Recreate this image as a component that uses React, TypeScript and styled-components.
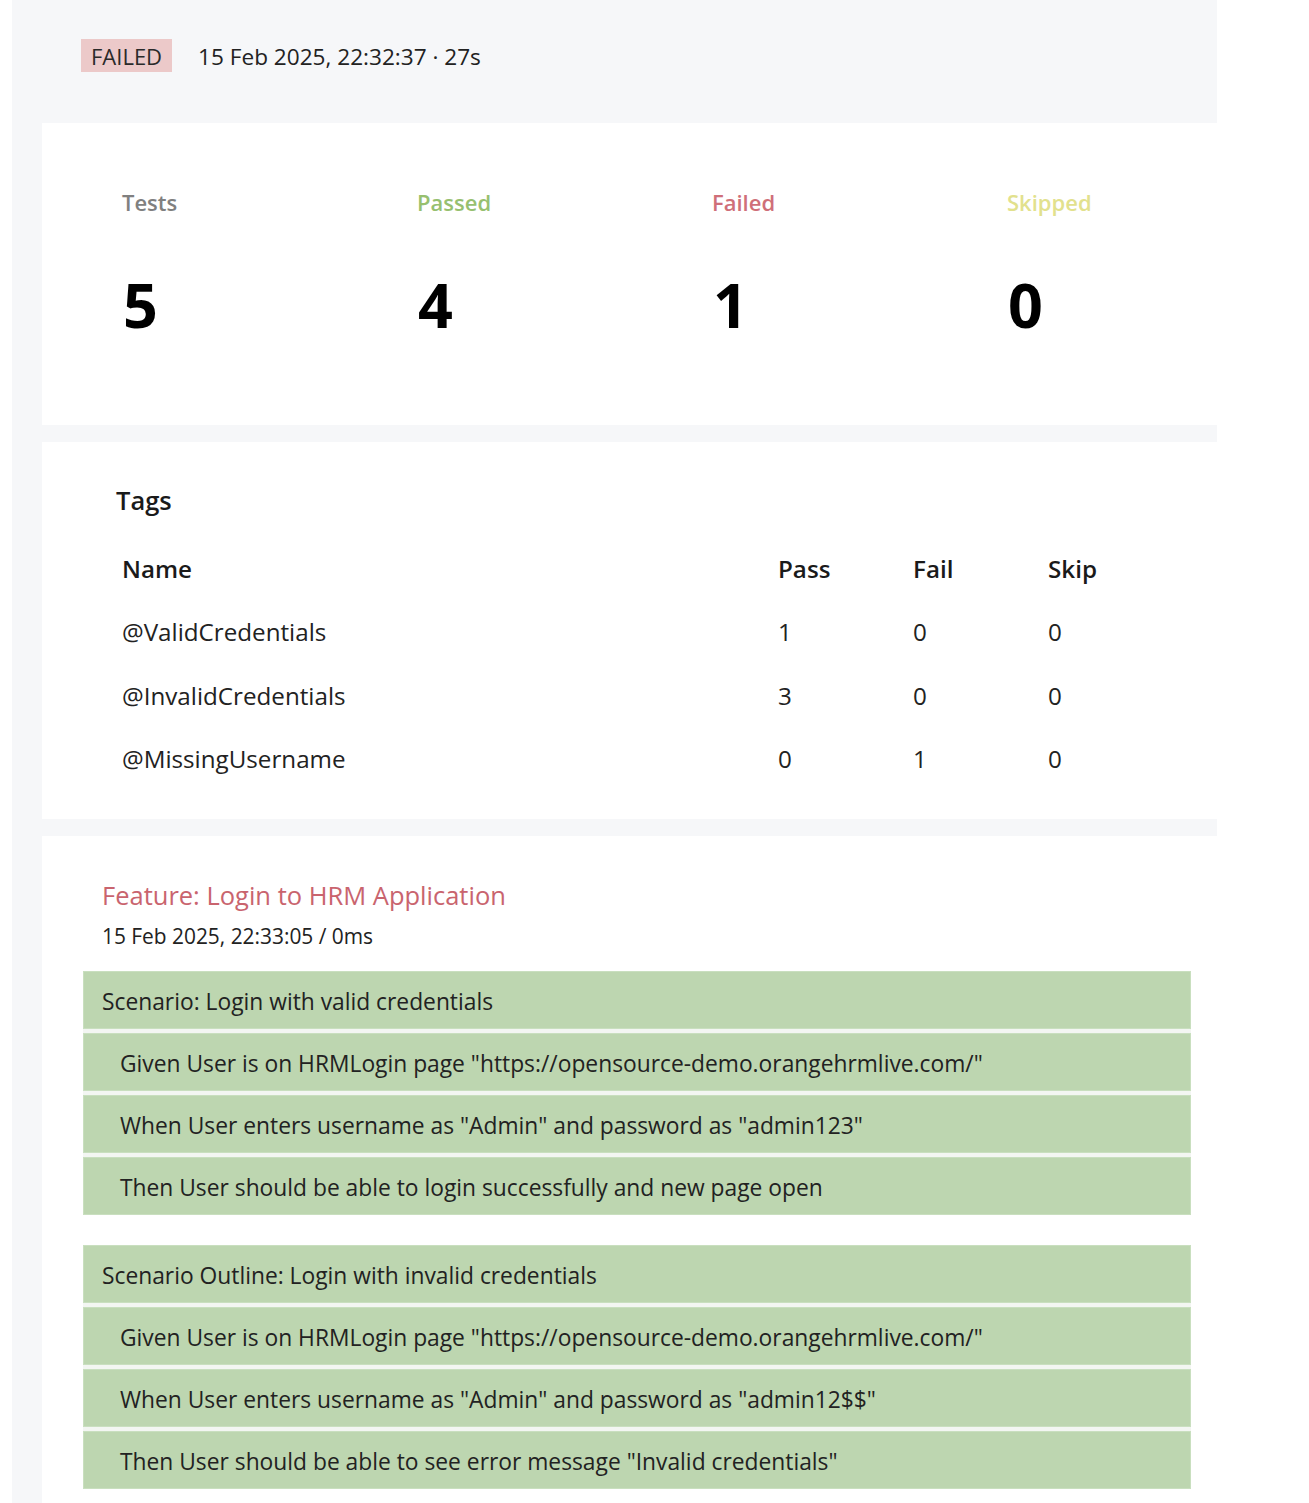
import React from "react";
import styled, { createGlobalStyle } from "styled-components";

const GlobalStyle = createGlobalStyle`
  html, body { margin: 0; padding: 0; background: #ffffff; }
  body { font-family: "Open Sans", "Noto Sans", Arial, sans-serif; color: #222222; }
  * { box-sizing: border-box; }
`;

const Page = styled.div`
  padding-left: 12px;
  width: 1217px;
`;

const Panel = styled.div`
  background: #f6f7f9;
  min-height: 1503px;
  display: flex;
  flex-direction: column;
`;

const Header = styled.header`
  height: 123px;
  padding: 39px 0 0 69px;
  display: flex;
  align-items: flex-start;
  gap: 26px;
`;

const Badge = styled.span`
  display: inline-flex;
  align-items: center;
  height: 33px;
  padding: 0 10px;
  background: #ecc9c9;
  color: #2a2a2a;
  font-size: 22px;
`;

const RunInfo = styled.span`
  height: 34px;
  display: inline-flex;
  align-items: center;
  font-size: 22.6px;
  color: #222;
`;

const Card = styled.section<{ $pt: number; $pb: number; $grow?: boolean }>`
  margin-left: 30px;
  background: #ffffff;
  padding-top: ${(p) => p.$pt}px;
  padding-bottom: ${(p) => p.$pb}px;
  flex: ${(p) => (p.$grow ? "1 1 auto" : "0 0 auto")};
  & + & { margin-top: 17px; }
`;

const StatsGrid = styled.div`
  display: grid;
  grid-template-columns: repeat(4, 295px);
  padding-left: 80px;
  row-gap: 52px;
`;

const StatLabel = styled.div<{ $color: string }>`
  font-size: 22px;
  line-height: 30px;
  font-weight: 600;
  color: ${(p) => p.$color};
`;

const StatValue = styled.div`
  font-size: 61px;
  line-height: 72px;
  font-weight: 700;
  color: #000;
  padding-left: 1px;
`;

const SectionTitle = styled.h2`
  margin: 0 0 21px 74px;
  font-size: 25.5px;
  line-height: 32px;
  font-weight: 600;
  color: #1a1a1a;
`;

const TagTable = styled.table`
  margin-left: 74px;
  border-collapse: collapse;
  font-size: 24.2px;
  color: #222;
`;

const Th = styled.th<{ $w: number }>`
  width: ${(p) => p.$w}px;
  height: 63.3px;
  padding: 0 6px;
  text-align: left;
  font-weight: 600;
  color: #1a1a1a;
`;

const Td = styled.td`
  height: 63.3px;
  padding: 0 6px;
  font-weight: 400;
`;

const FeatureTitle = styled.h3`
  margin: 0 0 10px 60px;
  font-size: 25.5px;
  line-height: 34px;
  font-weight: 500;
  color: #c9646e;
`;

const FeatureMeta = styled.div`
  margin: 0 0 21px 60px;
  font-size: 20.9px;
  line-height: 28px;
  color: #222;
`;

const ScenarioList = styled.div`
  margin: 0 26px 0 41px;
  display: flex;
  flex-direction: column;
  gap: 30px;
`;

const Scenario = styled.div`
  display: flex;
  flex-direction: column;
  gap: 4px;
  background: #f3f6f2;
`;

const Row = styled.div<{ $step?: boolean }>`
  height: 58px;
  display: flex;
  align-items: center;
  padding-left: ${(p) => (p.$step ? 37 : 19)}px;
  padding-top: 2px;
  background: #bdd6b0;
  box-shadow: inset 0 0 0 1px #c9dfbf;
  font-size: 22.8px;
  color: #222;
  white-space: nowrap;
`;

const stats = [
  { label: "Tests", color: "#808080", value: 5 },
  { label: "Passed", color: "#97c06f", value: 4 },
  { label: "Failed", color: "#cf6f79", value: 1 },
  { label: "Skipped", color: "#e2e18d", value: 0 },
];

const tags = [
  { name: "@ValidCredentials", pass: 1, fail: 0, skip: 0 },
  { name: "@InvalidCredentials", pass: 3, fail: 0, skip: 0 },
  { name: "@MissingUsername", pass: 0, fail: 1, skip: 0 },
];

const scenarios = [
  {
    title: "Scenario: Login with valid credentials",
    steps: [
      'Given User is on HRMLogin page "https://opensource-demo.orangehrmlive.com/"',
      'When User enters username as "Admin" and password as "admin123"',
      "Then User should be able to login successfully and new page open",
    ],
  },
  {
    title: "Scenario Outline: Login with invalid credentials",
    steps: [
      'Given User is on HRMLogin page "https://opensource-demo.orangehrmlive.com/"',
      'When User enters username as "Admin" and password as "admin12$$"',
      'Then User should be able to see error message "Invalid credentials"',
    ],
  },
];

export default function App() {
  return (
    <>
      <GlobalStyle />
      <Page>
        <Panel>
          <Header>
            <Badge>FAILED</Badge>
            <RunInfo>15 Feb 2025, 22:32:37 · 27s</RunInfo>
          </Header>

          <Card $pt={64} $pb={84}>
            <StatsGrid>
              {stats.map((s) => (
                <StatLabel key={s.label} $color={s.color}>
                  {s.label}
                </StatLabel>
              ))}
              {stats.map((s) => (
                <StatValue key={s.label}>{s.value}</StatValue>
              ))}
            </StatsGrid>
          </Card>

          <Card $pt={42} $pb={29}>
            <SectionTitle>Tags</SectionTitle>
            <TagTable>
              <thead>
                <tr>
                  <Th $w={656}>Name</Th>
                  <Th $w={135}>Pass</Th>
                  <Th $w={135}>Fail</Th>
                  <Th $w={135}>Skip</Th>
                </tr>
              </thead>
              <tbody>
                {tags.map((t) => (
                  <tr key={t.name}>
                    <Td>{t.name}</Td>
                    <Td>{t.pass}</Td>
                    <Td>{t.fail}</Td>
                    <Td>{t.skip}</Td>
                  </tr>
                ))}
              </tbody>
            </TagTable>
          </Card>

          <Card $pt={42} $pb={16} $grow>
            <FeatureTitle>Feature: Login to HRM Application</FeatureTitle>
            <FeatureMeta>15 Feb 2025, 22:33:05 / 0ms</FeatureMeta>
            <ScenarioList>
              {scenarios.map((sc) => (
                <Scenario key={sc.title}>
                  <Row>{sc.title}</Row>
                  {sc.steps.map((st) => (
                    <Row key={st} $step>
                      {st}
                    </Row>
                  ))}
                </Scenario>
              ))}
            </ScenarioList>
          </Card>
        </Panel>
      </Page>
    </>
  );
}
